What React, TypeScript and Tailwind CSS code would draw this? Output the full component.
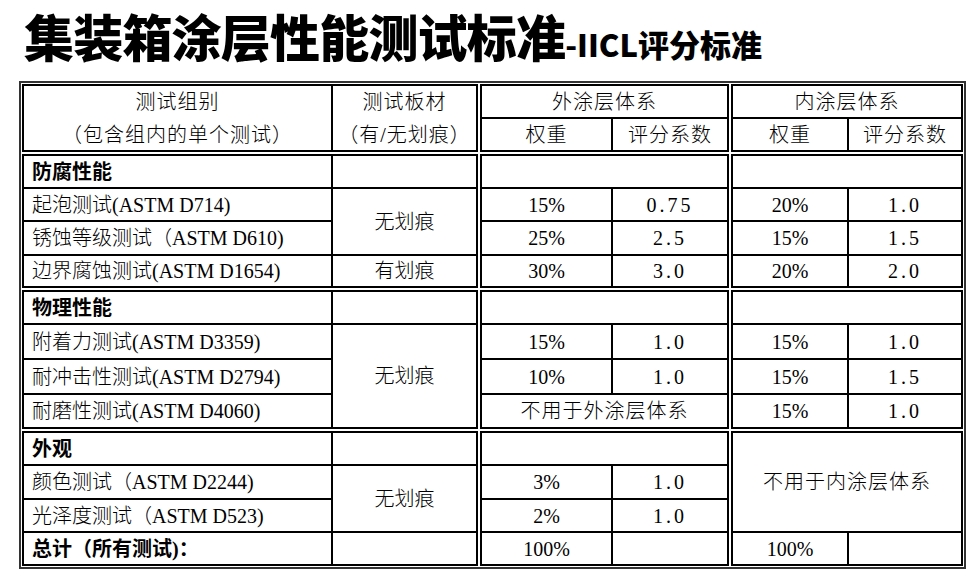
import { ReactNode } from "react";

interface CellProps {
  children?: ReactNode;
  className?: string;
}

function Cell({ children, className = "" }: CellProps) {
  return <div className={`bg-white flex items-center justify-center ${className}`}>{children}</div>;
}

function Label({ children, className = "" }: CellProps) {
  return <div className={`bg-white flex items-center justify-start pl-[8px] ${className}`}>{children}</div>;
}

function Num({ children, className = "" }: CellProps) {
  return <Cell className={`tracking-[3px] ${className}`}>{children}</Cell>;
}

const blockA = "grid grid-cols-[307px_143px] gap-[2px] bg-black border-2 border-black";
const blockB = "grid grid-cols-[129px_114px] gap-[2px] bg-black border-2 border-black";
const blockC = "grid grid-cols-[114px_112px] gap-[2px] bg-black border-2 border-black";

export default function App() {
  return (
    <div className="w-[979px] h-[577px] overflow-hidden bg-white pl-[19px] text-black">
      <div className="h-[81px] pt-[10px] pl-[5px] whitespace-nowrap text-[50px] leading-[50px] font-black font-['Noto_Sans_CJK_SC',sans-serif]">
        <span className="tracking-[-0.8px]">集装箱涂层性能测试标准</span>
        <span className="text-[31px]">-IICL评分标准</span>
      </div>

      <div className="w-[947px] border-2 border-[#333] p-[1px] font-['Liberation_Serif','Noto_Sans_CJK_SC',serif] font-light text-[20px] leading-none">
        <div className="grid grid-cols-[456px_249px_232px] gap-[2px]">
          {/* header */}
          <div className={`${blockA} grid-rows-[31px_31px]`}>
            <div className="row-span-2 bg-white flex flex-col tracking-[1px]">
              <div className="h-[31px] flex items-center justify-center">测试组别</div>
              <div className="h-[31px] mt-[2px] flex items-center justify-center">（包含组内的单个测试）</div>
            </div>
            <div className="row-span-2 bg-white flex flex-col tracking-[1px]">
              <div className="h-[31px] flex items-center justify-center">测试板材</div>
              <div className="h-[31px] mt-[2px] flex items-center justify-center">（有/无划痕）</div>
            </div>
          </div>
          <div className={`${blockB} grid-rows-[31px_31px] tracking-[1px]`}>
            <Cell className="col-span-2">外涂层体系</Cell>
            <Cell>权重</Cell>
            <Cell>评分系数</Cell>
          </div>
          <div className={`${blockC} grid-rows-[31px_31px] tracking-[1px]`}>
            <Cell className="col-span-2">内涂层体系</Cell>
            <Cell>权重</Cell>
            <Cell>评分系数</Cell>
          </div>

          {/* 防腐性能 */}
          <div className={`${blockA} grid-rows-[31px_31px_32px_30px]`}>
            <Label className="font-bold">防腐性能</Label>
            <Cell />
            <Label>起泡测试(ASTM D714)</Label>
            <Cell className="row-span-2">无划痕</Cell>
            <Label>锈蚀等级测试（ASTM D610)</Label>
            <Label>边界腐蚀测试(ASTM D1654)</Label>
            <Cell>有划痕</Cell>
          </div>
          <div className={`${blockB} grid-rows-[31px_31px_32px_30px]`}>
            <Cell className="col-span-2" />
            <Cell>15%</Cell>
            <Num>0.75</Num>
            <Cell>25%</Cell>
            <Num>2.5</Num>
            <Cell>30%</Cell>
            <Num>3.0</Num>
          </div>
          <div className={`${blockC} grid-rows-[31px_31px_32px_30px]`}>
            <Cell className="col-span-2" />
            <Cell>20%</Cell>
            <Num>1.0</Num>
            <Cell>15%</Cell>
            <Num>1.5</Num>
            <Cell>20%</Cell>
            <Num>2.0</Num>
          </div>

          {/* 物理性能 */}
          <div className={`${blockA} grid-rows-[31px_33px_33px_32px]`}>
            <Label className="font-bold">物理性能</Label>
            <Cell />
            <Label>附着力测试(ASTM D3359)</Label>
            <Cell className="row-span-3">无划痕</Cell>
            <Label>耐冲击性测试(ASTM D2794)</Label>
            <Label>耐磨性测试(ASTM D4060)</Label>
          </div>
          <div className={`${blockB} grid-rows-[31px_33px_33px_32px]`}>
            <Cell className="col-span-2" />
            <Cell>15%</Cell>
            <Num>1.0</Num>
            <Cell>10%</Cell>
            <Num>1.0</Num>
            <Cell className="col-span-2 tracking-[1px]">不用于外涂层体系</Cell>
          </div>
          <div className={`${blockC} grid-rows-[31px_33px_33px_32px]`}>
            <Cell className="col-span-2" />
            <Cell>15%</Cell>
            <Num>1.0</Num>
            <Cell>15%</Cell>
            <Num>1.5</Num>
            <Cell>15%</Cell>
            <Num>1.0</Num>
          </div>

          {/* 外观 */}
          <div className={`${blockA} grid-rows-[31px_32px_31px_31px]`}>
            <Label className="font-bold">外观</Label>
            <Cell />
            <Label>颜色测试（ASTM D2244)</Label>
            <Cell className="row-span-2">无划痕</Cell>
            <Label>光泽度测试（ASTM D523)</Label>
            <Label className="font-bold">总计（所有测试)：</Label>
            <Cell />
          </div>
          <div className={`${blockB} grid-rows-[31px_32px_31px_31px]`}>
            <Cell className="col-span-2" />
            <Cell>3%</Cell>
            <Num>1.0</Num>
            <Cell>2%</Cell>
            <Num>1.0</Num>
            <Cell>100%</Cell>
            <Cell />
          </div>
          <div className={`${blockC} grid-rows-[31px_32px_31px_31px]`}>
            <Cell className="col-span-2 row-span-3 tracking-[1px]">不用于内涂层体系</Cell>
            <Cell>100%</Cell>
            <Cell />
          </div>
        </div>
      </div>
    </div>
  );
}
